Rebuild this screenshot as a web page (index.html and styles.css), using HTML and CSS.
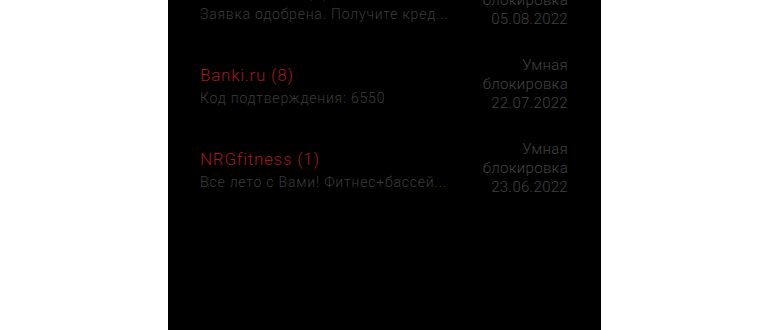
FILE: index.html
```html
<!DOCTYPE html>
<html lang="ru">
<head>
  <meta charset="UTF-8" />
  <meta name="viewport" content="width=device-width, initial-scale=1.0"/>
  <title>Сообщения</title>
  <link rel="stylesheet" href="styles.css">
</head>
<body>
  <div class="screen">
    <ul class="sms-list">
      <li class="sms-item">
        <div class="sms-text">
          <div class="sms-sender">Альфа-Банк (2)</div>
          <div class="sms-preview">Заявка одобрена. Получите кред...</div>
        </div>
        <div class="sms-meta">
          <span>Умная блокировка</span>
          <span>05.08.2022</span>
        </div>
      </li>
      <li class="sms-item">
        <div class="sms-text">
          <div class="sms-sender">Banki.ru (8)</div>
          <div class="sms-preview">Код подтверждения: 6550</div>
        </div>
        <div class="sms-meta">
          <span>Умная блокировка</span>
          <span>22.07.2022</span>
        </div>
      </li>
      <li class="sms-item">
        <div class="sms-text">
          <div class="sms-sender">NRGfitness (1)</div>
          <div class="sms-preview">Все лето с Вами! Фитнес+бассей...</div>
        </div>
        <div class="sms-meta">
          <span>Умная блокировка</span>
          <span>23.06.2022</span>
        </div>
      </li>
    </ul>
  </div>
</body>
</html>
```

FILE: styles.css
```css
html, body {
  height: 100%;
}

body {
  margin: 0;
  background: #fff;
  font-family: Roboto, 'Noto Sans', sans-serif;
  font-weight: 300;
  display: flex;
  justify-content: center;
  overflow: hidden;
}

.screen {
  width: 433px;
  height: 100%;
  margin-left: -1px;
  background: #000;
  overflow: hidden;
}

.sms-list {
  list-style: none;
  margin: -42px 0 0;
  padding: 0 33px 0 32px;
}

.sms-item {
  height: 84px;
  display: flex;
  align-items: center;
  justify-content: space-between;
}

.sms-text {
  padding-top: 5px;
}

.sms-sender {
  color: #a3151e;
  font-size: 17px;
  line-height: 22px;
  letter-spacing: 0.75px;
}

.sms-preview {
  color: #3c3c3c;
  font-size: 14px;
  line-height: 24px;
  letter-spacing: 0.8px;
  white-space: nowrap;
}

.sms-meta {
  width: 90px;
  color: #424242;
  font-size: 15px;
  line-height: 19px;
  letter-spacing: 0.3px;
  text-align: right;
}

.sms-meta span {
  display: block;
}
```
